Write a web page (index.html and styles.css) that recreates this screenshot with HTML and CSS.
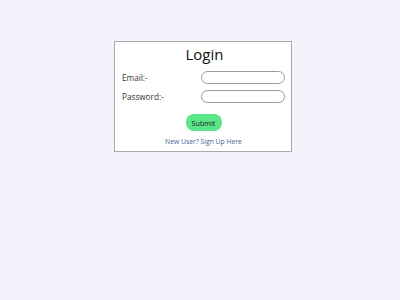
FILE: index.html
```html
<!DOCTYPE html>
<html>
<head>
<meta charset="utf-8">
<link rel="stylesheet" href="styles.css">
</head>
<body>
<div class="card">
  <h1 class="title">Login</h1>
  <form class="form">
    <div class="row">
      <label class="label">Email:-</label>
      <input class="field" type="text">
    </div>
    <div class="row">
      <label class="label">Password:-</label>
      <input class="field" type="password">
    </div>
    <div class="actions">
      <button class="submit" type="button">Submit</button>
    </div>
    <a class="signup" href="#">New User? Sign Up Here</a>
  </form>
</div>
</body>
</html>
```
FILE: styles.css
```css
html, body {
  margin: 0;
  padding: 0;
}
body {
  background: #f3f3fb;
  font-family: "Open Sans", "Noto Sans", sans-serif;
  width: 400px;
  height: 300px;
}
.card {
  box-sizing: border-box;
  width: 178px;
  height: 111px;
  margin: 41px 0 0 114px;
  background: #ffffff;
  border: 1px solid #a8a8b0;
  padding: 2px 6px 0 7px;
}
.title {
  margin: 0;
  text-align: center;
  font-size: 15px;
  font-weight: 400;
  line-height: 20px;
  color: #111;
  padding-left: 2px;
}
.form {
  display: flex;
  flex-direction: column;
  margin-top: 2px;
}
.row {
  display: flex;
  align-items: center;
  justify-content: space-between;
  height: 13px;
  margin-top: 5px;
}
.row + .row {
  margin-top: 6px;
}
.label {
  font-size: 8.2px;
  color: #333;
}
.field {
  box-sizing: border-box;
  width: 84px;
  height: 13px;
  border: 1px solid #999;
  border-radius: 7px;
  background: #fff;
  padding: 0;
  margin: 0;
}
.actions {
  display: flex;
  justify-content: center;
  margin-top: 11px;
}
.submit {
  width: 36px;
  height: 17px;
  border: none;
  border-radius: 8px;
  background: #5ce68a;
  color: #1a1a1a;
  font-family: "Open Sans", "Noto Sans", sans-serif;
  font-size: 7.2px;
  padding: 0;
}
.signup {
  margin-top: 6px;
  text-align: center;
  font-size: 6.8px;
  color: #3f6496;
  text-decoration: none;
}
```
